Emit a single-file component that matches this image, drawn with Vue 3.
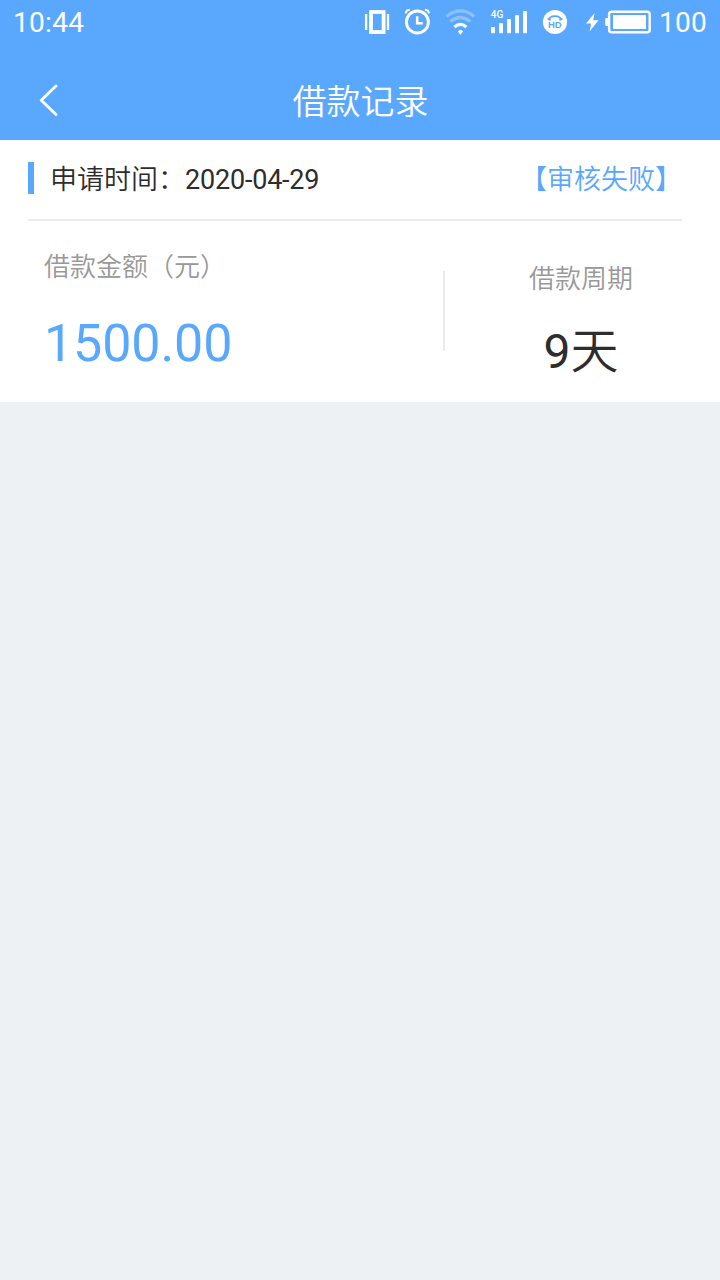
<template>
  <div class="page">
    <header class="top">
      <div class="status-bar">
        <span class="clock">10:44</span>
        <svg class="status-icons" width="296" height="44" viewBox="360 0 296 44" fill="none" xmlns="http://www.w3.org/2000/svg">
          <!-- vibrate -->
          <rect x="371" y="12" width="12.6" height="20" stroke="#fff" stroke-width="3.8"/>
          <path d="M366.1 14V30M388 14V30" stroke="#fff" stroke-width="2.3"/>
          <!-- alarm -->
          <circle cx="417.4" cy="22" r="11" stroke="#fff" stroke-width="2.9"/>
          <path d="M417.2 16.2V23.2H422.8" stroke="#fff" stroke-width="2.6"/>
          <path d="M405.8 13.4Q406 10 409.8 9.8M425 9.8Q428.8 10 429 13.4" stroke="#fff" stroke-width="2"/>
          <!-- wifi -->
          <g stroke="#fff" stroke-width="3.2">
            <path d="M446.6 16.4Q460.4 5.4 474.2 16.4" opacity="0.3"/>
            <path d="M450.4 21.6Q460.4 13.4 470.4 21.6" opacity="0.3"/>
            <path d="M454.4 27.2Q460.4 21.6 466.4 27.2"/>
          </g>
          <path d="M457.8 31.4Q460.4 28.8 463 31.4L460.4 34.8Z" fill="#fff"/>
          <!-- signal -->
          <text class="net" x="490.8" y="18.3" fill="#fff">4G</text>
          <g fill="#fff">
            <rect
              v-for="(top, i) in bars"
              :key="i"
              :x="491 + i * 8"
              :y="top"
              width="4"
              :height="33.2 - top"
              rx="1"
            />
          </g>
          <!-- hd -->
          <circle cx="555" cy="22" r="12.1" fill="#fff"/>
          <path d="M548.8 20C550 14.8 560 14.8 561.2 20" stroke="#59a8fe" stroke-width="1.8"/>
          <path d="M547.6 18.6L550.6 20M562.4 18.6L559.4 20" stroke="#59a8fe" stroke-width="1.8"/>
          <text class="hd" x="548" y="28.2" fill="#59a8fe">HD</text>
          <!-- battery -->
          <path d="M594.6 13L586 23.4H591.2L589.6 31.4L598.6 20.2H593.2Z" fill="#fff"/>
          <rect x="609.1" y="11.7" width="40.6" height="20.6" rx="2.6" stroke="#fff" stroke-width="2.4"/>
          <rect x="613" y="15" width="33" height="14" rx="0.8" fill="#fff"/>
          <path d="M608 18H606.4Q605.2 18 605.2 19.2V24.8Q605.2 26 606.4 26H608Z" fill="#fff"/>
        </svg>
        <span class="level">100</span>
      </div>
      <div class="nav-bar">
        <svg class="back" width="20" height="32" viewBox="0 0 20 32" fill="none" xmlns="http://www.w3.org/2000/svg">
          <path d="M18 2L3.2 16.3L18 30.6" stroke="#fff" stroke-width="2.8" stroke-linecap="round" stroke-linejoin="round"/>
        </svg>
        <h1 class="title">借款记录</h1>
      </div>
    </header>

    <section v-for="item in records" :key="item.date" class="record">
      <div class="record-head">
        <div class="apply-time">申请时间：<span class="date">{{ item.date }}</span></div>
        <span class="state">【{{ item.state }}】</span>
      </div>
      <div class="record-body">
        <div class="amount">
          <p class="label">借款金额（元）</p>
          <p class="amount-value">{{ item.amount }}</p>
        </div>
        <div class="period">
          <p class="label">借款周期</p>
          <p class="period-value"><span class="days">{{ item.days }}</span>天</p>
        </div>
      </div>
    </section>
  </div>
</template>

<script setup>
import { ref } from 'vue'

// top edge of each signal bar
const bars = [27, 23, 19, 15, 11]

const records = ref([
  { date: '2020-04-29', state: '审核失败', amount: '1500.00', days: 9 }
])
</script>

<style>
body {
  background-color: #edf1f3;
}
</style>

<style scoped>
.page {
  min-height: 100vh;
  background-color: #edf1f3;
  font-family: Roboto, "Noto Sans CJK SC", sans-serif;
  font-weight: 350;
  color: #2d2d2d;
}

.top {
  height: 140px;
  background-color: #59a8fe;
  color: #fff;
}

.status-bar {
  display: flex;
  align-items: center;
  height: 44px;
  padding: 0 12px 0 13px;
  font-size: 28px;
  font-weight: 400;
  line-height: 44px;
}

.clock,
.level {
  padding-top: 2px;
  letter-spacing: 0.3px;
}

.status-icons {
  margin-left: auto;
  flex: none;
}

.level {
  width: 52px;
  padding-left: 3px;
  box-sizing: border-box;
}

.net {
  font: 500 10px Roboto, sans-serif;
}

.hd {
  font: bold 9.5px "Liberation Sans", sans-serif;
}

.nav-bar {
  display: flex;
  align-items: center;
  height: 96px;
  padding: 0 38px;
}

.back {
  flex: none;
  margin-top: 16px;
}

.title {
  flex: 1;
  margin: 19px 19px 0 0;
  font-size: 34px;
  font-weight: 350;
  line-height: 48px;
  text-align: center;
}

.record {
  height: 262px;
  padding: 0 38px 0 28px;
  box-sizing: border-box;
  background-color: #fff;
}

.record-head {
  display: flex;
  align-items: center;
  justify-content: space-between;
  height: 81px;
  padding-bottom: 3px;
  box-sizing: border-box;
  border-bottom: 2px solid #ebebeb;
  font-size: 27px;
}

.apply-time {
  height: 32px;
  padding-left: 16px;
  border-left: 6px solid #59a8fe;
  line-height: 37px;
}

.date {
  font-weight: 400;
  letter-spacing: -0.2px;
}

.state {
  height: 32px;
  color: #59a8fe;
  line-height: 37px;
}

.record-body {
  display: flex;
  align-items: center;
  height: 181px;
}

.label {
  margin: 0;
  font-size: 26px;
  line-height: 36px;
  color: #999;
}

.amount {
  flex: none;
  width: 415px;
  padding-left: 16px;
  box-sizing: border-box;
}

.amount-value {
  margin: 29px 0 0;
  font-size: 52px;
  font-weight: 400;
  line-height: 60px;
  letter-spacing: -0.1px;
  color: #59a8fe;
}

.period {
  display: flex;
  flex: 1;
  flex-direction: column;
  align-items: center;
  height: 80px;
  margin-bottom: 1px;
  padding-left: 35px;
  border-left: 2px solid #ebebeb;
}

.period .label {
  margin-top: -10px;
}

.period-value {
  margin: 25px 0 0;
  font-size: 48px;
  line-height: 60px;
}

.days {
  font-weight: 400;
}
</style>
